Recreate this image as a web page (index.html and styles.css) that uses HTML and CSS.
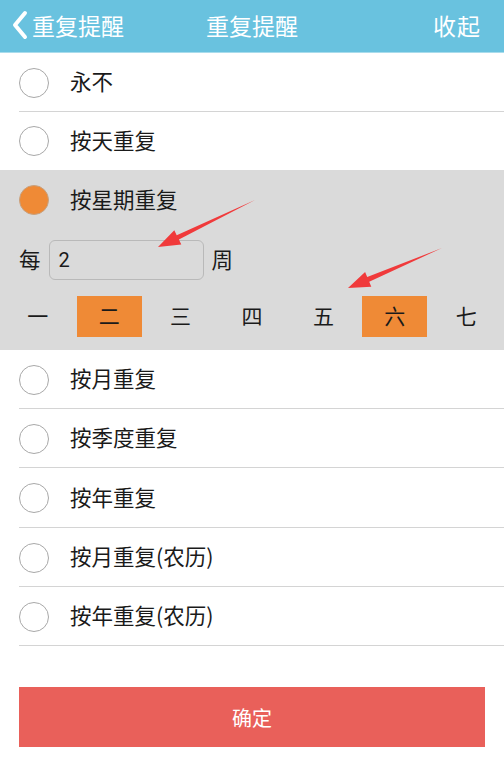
FILE: index.html
```html
<!DOCTYPE html>
<html lang="zh">
<head>
<meta charset="utf-8">
<title>重复提醒</title>
<link rel="stylesheet" href="styles.css">
</head>
<body>
<div class="page">
  <header class="topbar">
    <div class="back">
      <svg class="chev" width="18" height="30" viewBox="0 0 18 30"><path d="M14 3 L4 15 L14 27" fill="none" stroke="#fff" stroke-width="4" stroke-linecap="round" stroke-linejoin="round"/></svg>
      <span>重复提醒</span>
    </div>
    <div class="title">重复提醒</div>
    <div class="collapse">收起</div>
  </header>

  <ul class="list">
    <li class="row"><span class="radio"></span><span class="label">永不</span></li>
    <li class="row short"><span class="radio"></span><span class="label">按天重复</span></li>
    <li class="week">
      <div class="week-head"><span class="radio on"></span><span class="label">按星期重复</span></div>
      <div class="every">
        <span class="unit">每</span>
        <div class="input">2</div>
        <span class="unit">周</span>
      </div>
      <div class="days">
        <span class="day">一</span>
        <span class="day sel">二</span>
        <span class="day">三</span>
        <span class="day">四</span>
        <span class="day">五</span>
        <span class="day sel">六</span>
        <span class="day">七</span>
      </div>
    </li>
    <li class="row"><span class="radio"></span><span class="label">按月重复</span></li>
    <li class="row"><span class="radio"></span><span class="label">按季度重复</span></li>
    <li class="row tall"><span class="radio"></span><span class="label">按年重复</span></li>
    <li class="row"><span class="radio"></span><span class="label">按月重复(农历)</span></li>
    <li class="row"><span class="radio"></span><span class="label">按年重复(农历)</span></li>
  </ul>

  <div class="actions">
    <button class="confirm">确定</button>
  </div>

  <svg class="marks" width="504" height="759" viewBox="0 0 504 759">
    <polygon fill="#f03a3b" points="255,200 178.9,239.6 181.3,244.6 158,247 174.3,230.2 176.7,235.2"/>
    <polygon fill="#f03a3b" points="442,248 369.2,281.7 371.3,286.8 348,288 365.1,272 367.2,277.1"/>
  </svg>
</div>
</body>
</html>
```

FILE: styles.css
```css
* { box-sizing: border-box; }
html, body { margin: 0; padding: 0; background: #fff; }
body {
  font-family: "Noto Sans CJK SC", "Noto Sans", sans-serif;
  color: #1a1a1a;
}
.page { position: relative; width: 504px; height: 759px; overflow: hidden; }

.topbar {
  height: 53px;
  background: #69c2df;
  border-bottom: 1px solid #a9dcec;
  display: flex;
  align-items: center;
  justify-content: space-between;
  padding: 0 23px 2px 11px;
  color: #fff;
  font-size: 23px;
  line-height: 1;
  position: relative;
}
.back { display: flex; align-items: center; gap: 3px; }
.chev { display: block; }
.title { position: absolute; left: 0; right: 0; text-align: center; pointer-events: none; }
.collapse { letter-spacing: 1px; }

.list { list-style: none; margin: 0; padding: 0; }
.row {
  height: 59px;
  display: flex;
  align-items: center;
  padding-left: 19px;
  position: relative;
}
.row.short { height: 58px; }
.row.tall { height: 60px; }
.row::after {
  content: "";
  position: absolute;
  left: 19px; right: 0; bottom: 0;
  height: 1px;
  background: #d4d4d4;
}
.row.short::after { display: none; }

.radio {
  width: 30px; height: 30px;
  border-radius: 50%;
  border: 1.5px solid #a8a8a8;
  background: #fff;
  flex: none;
}
.radio.on { background: #ef8a36; border: 1px solid #c7a17f; }
.label { margin-left: 21px; font-size: 21.5px; line-height: 1; padding-bottom: 3px; }

.week {
  background: #dadada;
  height: 180px;
  display: flex;
  flex-direction: column;
}
.week-head {
  height: 60px;
  display: flex;
  align-items: center;
  padding-left: 19px;
}
.every {
  display: flex;
  align-items: center;
  padding-left: 19px;
  margin-top: 10px;
  height: 40px;
}
.unit { font-size: 21.5px; line-height: 1; padding-bottom: 2px; }
.input {
  width: 155px; height: 40px;
  margin: 0 8px 0 8px;
  border: 1px solid #b9b9b9;
  border-radius: 6px;
  font-family: "Roboto", "Noto Sans", sans-serif;
  font-size: 20px;
  display: flex;
  align-items: center;
  padding-left: 9px;
}
.days {
  display: grid;
  grid-template-columns: repeat(7, 1fr);
  padding: 0 2px;
  margin-top: 16px;
  height: 41px;
}
.day {
  display: flex;
  align-items: center;
  justify-content: center;
  font-size: 21px;
  line-height: 1;
  padding-bottom: 2px;
  width: 65px;
  justify-self: center;
}
.day.sel { background: #ef8a36; }

.actions { padding: 41px 19px 0 19px; }
.confirm {
  width: 466px; height: 60px;
  border: none;
  background: #e9605a;
  color: #fff;
  font-family: "Noto Sans CJK SC", "Noto Sans", sans-serif;
  font-size: 20px;
  display: block;
}

.marks { position: absolute; left: 0; top: 0; pointer-events: none; }
```
